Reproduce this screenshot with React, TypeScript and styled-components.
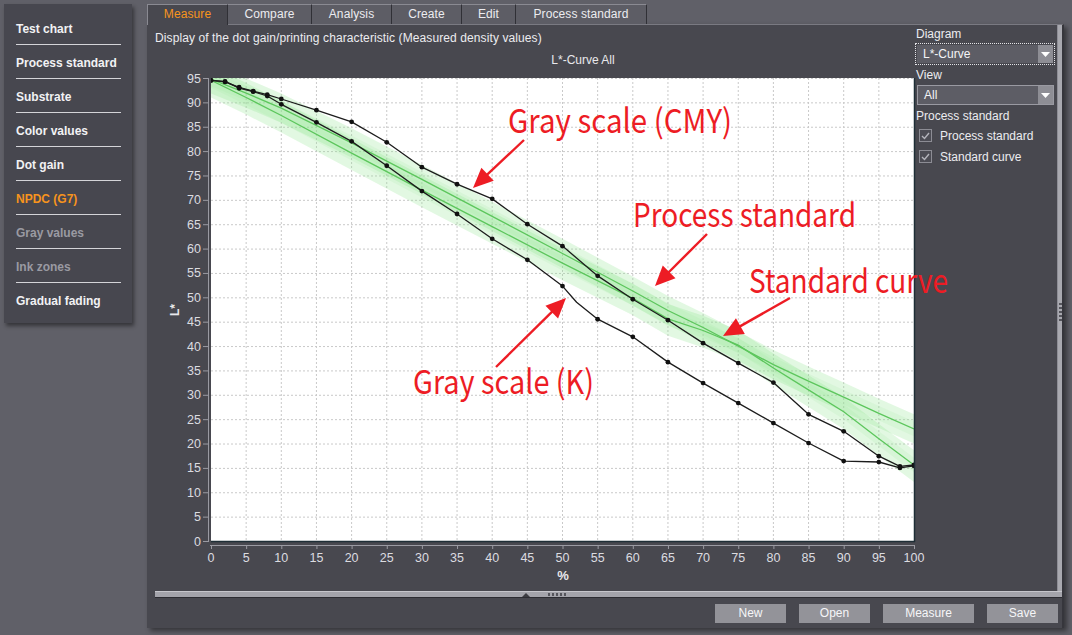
import React from "react";
import styled, { createGlobalStyle } from "styled-components";

const GlobalStyle = createGlobalStyle`
  html, body { margin: 0; padding: 0; background: #606068; }
  body {
    font-family: "Liberation Sans", Arial, sans-serif;
    font-size: 12px;
    color: #e8e8ec;
    width: 1072px;
    height: 635px;
    overflow: hidden;
  }
  * { box-sizing: border-box; }
`;

const Page = styled.div`
  display: flex;
  align-items: flex-start;
  gap: 15px;
  padding: 4px 0 0 4px;
`;

const Sidebar = styled.nav`
  width: 128px;
  background: #47474f;
  padding: 7px 11px 7px 12px;
  box-shadow: 2px 3px 4px rgba(0, 0, 0, 0.45);
  display: flex;
  flex-direction: column;
`;

type Tone = "normal" | "active" | "disabled";

const NavItem = styled.div<{ $tone: Tone; $last?: boolean }>`
  padding: 11px 0 8px;
  line-height: 14px;
  font-weight: bold;
  font-size: 12px;
  white-space: nowrap;
  color: ${(p) =>
    p.$tone === "active" ? "#f7941d" : p.$tone === "disabled" ? "#9a9aa2" : "#f2f2f4"};
  border-bottom: ${(p) => (p.$last ? "none" : "1px solid #d4d4d8")};
`;

const Panel = styled.section`
  position: relative;
  width: 917px;
  height: 624px;
  display: flex;
  flex-direction: column;
`;

const TabBar = styled.div`
  display: flex;
  height: 20px;
  align-items: flex-start;
`;

const Tab = styled.div<{ $w: number; $active?: boolean }>`
  width: ${(p) => p.$w}px;
  height: ${(p) => (p.$active ? 21 : 20)}px;
  position: relative;
  z-index: ${(p) => (p.$active ? 2 : 1)};
  background: ${(p) => (p.$active ? "#48484f" : "#5d5d65")};
  border-top: 1px solid #8a8a92;
  border-right: 1px solid #303036;
  border-left: ${(p) => (p.$active ? "1px solid #8a8a92" : "none")};
  color: ${(p) => (p.$active ? "#f7941d" : "#ececf0")};
  text-align: center;
  line-height: 19px;
  font-size: 12px;
  letter-spacing: 0.1px;
  white-space: nowrap;
`;

const Body = styled.div`
  flex: 1;
  display: flex;
  flex-direction: column;
  background: #48484f;
  border-top: 1px solid #7a7a82;
  border-right: 2px solid #36363c;
  box-shadow: 3px 3px 5px rgba(0, 0, 0, 0.45);
`;

const MainRow = styled.div`
  display: flex;
  height: 566px;
`;

const ChartCol = styled.div`
  width: 766px;
  display: flex;
  flex-direction: column;
`;

const Description = styled.div`
  padding: 6px 0 3px 8px;
  line-height: 14px;
  color: #ececf0;
  letter-spacing: 0.1px;
  white-space: nowrap;
`;

const ChartSvg = styled.svg`
  display: block;
  overflow: visible;
  position: relative;
  z-index: 1;
`;

const RightPanel = styled.aside`
  width: 144px;
  padding: 2px 2px 0 2px;
  display: flex;
  flex-direction: column;
`;

const FieldLabel = styled.div<{ $mt?: number }>`
  line-height: 14px;
  padding-left: 1px;
  margin-top: ${(p) => p.$mt ?? 0}px;
  color: #ececf0;
  white-space: nowrap;
`;

const FocusRing = styled.div`
  margin-top: 2px;
  height: 22px;
  border: 1px dotted #e4e4e8;
  padding: 1px;
  display: flex;
`;

const SelectBox = styled.div<{ $framed?: boolean }>`
  flex: ${(p) => (p.$framed ? "0 0 20px" : "1")};
  display: flex;
  align-items: stretch;
  background: #5d5d65;
  border: ${(p) => (p.$framed ? "1px solid #9a9aa2" : "none")};
  margin: ${(p) => (p.$framed ? "3px 1px 0 2px" : "0")};
`;

const SelectText = styled.div`
  flex: 1;
  padding-left: 6px;
  display: flex;
  align-items: center;
  color: #f4f4f6;
  font-size: 12px;
`;

const SelectArrow = styled.div`
  width: 15px;
  background: #8e8e95;
  display: flex;
  align-items: center;
  justify-content: center;
`;

const CheckRow = styled.div<{ $mt?: number }>`
  height: 21px;
  margin-top: ${(p) => p.$mt ?? 0}px;
  display: flex;
  align-items: center;
  gap: 8px;
  padding-left: 4px;
  color: #ececf0;
  white-space: nowrap;
`;

const CheckBox = styled.div`
  width: 13px;
  height: 13px;
  border: 1px solid #8c8c94;
  background: #4c4c54;
  display: flex;
  align-items: center;
  justify-content: center;
`;

const VSplit = styled.div`
  width: 5px;
  background: #a9a9b0;
  border-left: 1px solid #8e8e96;
  display: flex;
  align-items: center;
  justify-content: center;
`;

const VGrip = styled.div`
  width: 3px;
  height: 18px;
  margin-top: 8px;
  background: repeating-linear-gradient(to bottom, #55555c 0 2px, transparent 2px 4px);
`;

const HSplit = styled.div`
  height: 7px;
  margin-left: 8px;
  background: #a4a4ab;
  border-top: 1px solid #c6c6cc;
  border-bottom: 1px solid #2c2c32;
  display: flex;
  align-items: center;
  padding-left: 367px;
  gap: 18px;
`;

const HTriangle = styled.div`
  width: 0;
  height: 0;
  border-left: 4px solid transparent;
  border-right: 4px solid transparent;
  border-bottom: 4px solid #3c3c42;
`;

const HGrip = styled.div`
  width: 18px;
  height: 3px;
  background: repeating-linear-gradient(to right, #55555c 0 2px, transparent 2px 4px);
`;

const ButtonRow = styled.div`
  flex: 1;
  display: flex;
  justify-content: flex-end;
  align-items: flex-start;
  gap: 13px;
  padding: 6px 4px 0 0;
`;

const Button = styled.button<{ $w: number }>`
  width: ${(p) => p.$w}px;
  height: 19px;
  padding: 0;
  border: none;
  background: #939399;
  color: #f6f6f8;
  font-family: "Liberation Sans", Arial, sans-serif;
  font-size: 12px;
  line-height: 19px;
`;

const Overlay = styled.svg`
  position: absolute;
  left: 0;
  top: 0;
  z-index: 3;
  pointer-events: none;
  overflow: visible;
`;

/* ---------- chart geometry (page coordinates) ---------- */
const X0 = 211;
const X1 = 914;
const Y0 = 78;
const Y1 = 541;
const px = (v: number) => X0 + (v / 100) * (X1 - X0);
const py = (L: number) => Y1 - (L / 95) * (Y1 - Y0);
const toPts = (d: number[][]) =>
  d.map(([v, L]) => `${px(v).toFixed(1)},${py(L).toFixed(1)}`).join(" ");
const bandPts = (d: number[][], up: number, down: number) => {
  const top = d.map(([v, L]) => [v, L + up]);
  const bot = d.map(([v, L]) => [v, L - down]).reverse();
  return toPts([...top, ...bot]);
};

const CMY: number[][] = [
  [0, 94.5], [2, 94.2], [4, 93.1], [6, 92.3], [8, 91.6], [10, 90.7], [15, 88.4], [20, 86],
  [25, 81.8], [30, 76.7], [35, 73.2], [40, 70.2], [45, 65], [50, 60.5], [55, 54.4],
  [60, 49.6], [65, 45.3], [70, 40.6], [75, 36.5], [80, 32.5], [85, 26], [90, 22.5],
  [95, 17.4], [98, 15.3], [100, 15.6],
];
const K: number[][] = [
  [0, 94.5], [2, 94.3], [4, 92.9], [6, 92.2], [8, 91.3], [10, 89.6], [15, 85.9], [20, 82],
  [25, 77], [30, 71.8], [35, 67.1], [40, 62], [45, 57.7], [50, 52.3], [55, 45.5],
  [60, 41.9], [65, 36.7], [70, 32.4], [75, 28.3], [80, 24.2], [85, 20.1], [90, 16.4],
  [95, 16.2], [98, 15], [100, 15.4],
];
const KLine: number[][] = [...K.slice(0, 14), [52, 49], ...K.slice(14)];
const PS: number[][] = [
  [0, 94.8], [5, 91.9], [10, 88.8], [20, 81.7], [30, 74.2], [40, 66.6], [50, 59], [60, 51.3],
  [65, 47.3], [70, 43.8], [75, 40], [80, 36.2], [85, 32.8], [90, 29.5], [95, 26.2], [100, 23],
];
const SC: number[][] = [
  [0, 94.5], [5, 91], [10, 87.3], [20, 79.6], [30, 72], [40, 64.5], [50, 57], [60, 49.8],
  [65, 45.6], [70, 43.2], [75, 40.2], [80, 35.5], [85, 31], [90, 26.5], [95, 21], [100, 15.6],
];

const yTicks = Array.from({ length: 20 }, (_, i) => i * 5);
const xTicks = Array.from({ length: 21 }, (_, i) => i * 5);

function Chart() {
  return (
    <ChartSvg width={766} height={531} viewBox="0 0 766 531">
      <defs>
        <clipPath id="plotClip">
          <rect x={X0} y={Y0} width={X1 - X0} height={Y1 - Y0} />
        </clipPath>
      </defs>
      <g transform="translate(-147,-48)" fontFamily='"Liberation Sans", Arial, sans-serif'>
        <text x={583} y={64} fontSize={12} fill="#e8e8ec" textAnchor="middle">
          L*-Curve All
        </text>
        <rect x={X0} y={Y0} width={X1 - X0} height={Y1 - Y0} fill="#ffffff" />
        {/* grid */}
        {xTicks.slice(1, 20).map((v) => (
          <line key={`gx${v}`} x1={px(v)} x2={px(v)} y1={Y0} y2={Y1} stroke="#c9c9c9" strokeDasharray="2 2" />
        ))}
        {yTicks.slice(1).map((L) => (
          <line key={`gy${L}`} x1={X0} x2={X1} y1={py(L) + 0.5} y2={py(L) + 0.5} stroke="#c9c9c9" strokeDasharray="2 2" />
        ))}
        <g clipPath="url(#plotClip)">
          <polygon points={bandPts(SC, 3, 3.5)} fill="#8fe58f" opacity={0.26} />
          <polygon points={bandPts(PS, 3, 3)} fill="#8fe58f" opacity={0.26} />
          <polygon points={bandPts(SC, 1.5, 1.5)} fill="#8fe58f" opacity={0.12} />
          <polygon points={bandPts(PS, 1.5, 1.5)} fill="#8fe58f" opacity={0.12} />
          <polyline points={toPts(PS)} fill="none" stroke="#5cc65c" strokeWidth={1.3} />
          <polyline points={toPts(SC)} fill="none" stroke="#5cc65c" strokeWidth={1.3} />
          <polyline points={toPts(CMY)} fill="none" stroke="#1c1c1c" strokeWidth={1.3} strokeLinejoin="round" />
          <polyline points={toPts(KLine)} fill="none" stroke="#1c1c1c" strokeWidth={1.3} strokeLinejoin="round" />
          {CMY.map(([v, L]) => (
            <circle key={`c${v}`} cx={px(v)} cy={py(L)} r={2.4} fill="#111" />
          ))}
          {K.map(([v, L]) => (
            <circle key={`k${v}`} cx={px(v)} cy={py(L)} r={2.4} fill="#111" />
          ))}
        </g>
        {/* frame */}
        <line x1={X1 + 0.5} x2={X1 + 0.5} y1={Y0} y2={Y1 + 1} stroke="#1e2e36" strokeWidth={1.5} />
        <line x1={X0} x2={X1 + 1} y1={Y1 + 0.5} y2={Y1 + 0.5} stroke="#1e2e36" strokeWidth={1.5} />
        {/* y axis */}
        <line x1={208.5} x2={208.5} y1={Y0} y2={Y1 + 1} stroke="#9a9aa2" />
        {yTicks.map((L) => (
          <g key={`yt${L}`}>
            <line x1={203} x2={208} y1={py(L) + 0.5} y2={py(L) + 0.5} stroke="#9a9aa2" />
            <text x={201} y={py(L) + 4.5} fontSize={12.5} fill="#dcdce0" textAnchor="end">
              {L}
            </text>
          </g>
        ))}
        {/* x axis */}
        <line x1={X0 - 1} x2={X1 + 1} y1={545.5} y2={545.5} stroke="#9a9aa2" />
        {xTicks.map((v) => (
          <g key={`xt${v}`}>
            <line x1={px(v) + 0.5} x2={px(v) + 0.5} y1={546} y2={549} stroke="#9a9aa2" />
            <text x={px(v)} y={562} fontSize={12.5} fill="#dcdce0" textAnchor="middle">
              {v}
            </text>
          </g>
        ))}
        <text x={563} y={580} fontSize={13} fontWeight="bold" fill="#e8e8ec" textAnchor="middle">
          %
        </text>
        <text
          x={179}
          y={310}
          fontSize={12}
          fontWeight="bold"
          fill="#e8e8ec"
          textAnchor="middle"
          transform="rotate(-90 179 310)"
        >
          L*
        </text>
      </g>
    </ChartSvg>
  );
}

const RED = "#ed1c24";

function Arrow({ x1, y1, x2, y2 }: { x1: number; y1: number; x2: number; y2: number }) {
  const dx = x2 - x1;
  const dy = y2 - y1;
  const len = Math.hypot(dx, dy);
  const ux = dx / len;
  const uy = dy / len;
  const hl = 20;
  const hw = 9;
  const bx = x2 - ux * hl;
  const by = y2 - uy * hl;
  const p1 = `${bx - uy * hw},${by + ux * hw}`;
  const p2 = `${bx + uy * hw},${by - ux * hw}`;
  return (
    <g>
      <line x1={x1} y1={y1} x2={bx + ux * 2} y2={by + uy * 2} stroke={RED} strokeWidth={2.4} />
      <polygon points={`${x2},${y2} ${p1} ${p2}`} fill={RED} />
    </g>
  );
}

function Note({ x, y, w, children }: { x: number; y: number; w: number; children: string }) {
  return (
    <text
      x={x}
      y={y}
      fontSize={33}
      fill={RED}
      textLength={w}
      lengthAdjust="spacingAndGlyphs"
      fontFamily='"Noto Sans CJK JP", "Noto Sans", sans-serif'
    >
      {children}
    </text>
  );
}

function Annotations() {
  return (
    <Overlay width={917} height={624} viewBox="0 0 917 624">
      <g transform="translate(-147,-4)">
        <Note x={508} y={133} w={224}>Gray scale (CMY)</Note>
        <Note x={633} y={227} w={223}>Process standard</Note>
        <Note x={749} y={293} w={199}>Standard curve</Note>
        <Note x={413} y={394} w={181}>Gray scale (K)</Note>
        <Arrow x1={524} y1={140} x2={473} y2={188} />
        <Arrow x1={707} y1={234} x2={655} y2={286} />
        <Arrow x1={790} y1={298} x2={723} y2={336} />
        <Arrow x1={496} y1={367} x2={566} y2={298} />
      </g>
    </Overlay>
  );
}

const DownTriangle = () => (
  <svg width="9" height="5" viewBox="0 0 9 5">
    <polygon points="0,0 9,0 4.5,5" fill="#ffffff" />
  </svg>
);

const CheckMark = () => (
  <svg width="9" height="8" viewBox="0 0 9 8">
    <polyline points="1,4 3.5,6.5 8,1" fill="none" stroke="#b4b4bc" strokeWidth="1.4" />
  </svg>
);

const navItems: { label: string; tone: Tone }[] = [
  { label: "Test chart", tone: "normal" },
  { label: "Process standard", tone: "normal" },
  { label: "Substrate", tone: "normal" },
  { label: "Color values", tone: "normal" },
  { label: "Dot gain", tone: "normal" },
  { label: "NPDC (G7)", tone: "active" },
  { label: "Gray values", tone: "disabled" },
  { label: "Ink zones", tone: "disabled" },
  { label: "Gradual fading", tone: "normal" },
];

const tabs = [
  { label: "Measure", w: 81, active: true },
  { label: "Compare", w: 84 },
  { label: "Analysis", w: 80 },
  { label: "Create", w: 70 },
  { label: "Edit", w: 54 },
  { label: "Process standard", w: 131 },
];

export default function App() {
  return (
    <>
      <GlobalStyle />
      <Page>
        <Sidebar>
          {navItems.map((n, i) => (
            <NavItem key={n.label} $tone={n.tone} $last={i === navItems.length - 1}>
              {n.label}
            </NavItem>
          ))}
        </Sidebar>
        <Panel>
          <TabBar>
            {tabs.map((t) => (
              <Tab key={t.label} $w={t.w} $active={t.active}>
                {t.label}
              </Tab>
            ))}
          </TabBar>
          <Body>
            <MainRow>
              <ChartCol>
                <Description>
                  Display of the dot gain/printing characteristic (Measured density values)
                </Description>
                <Chart />
              </ChartCol>
              <RightPanel>
                <FieldLabel>Diagram</FieldLabel>
                <FocusRing>
                  <SelectBox>
                    <SelectText>L*-Curve</SelectText>
                    <SelectArrow>
                      <DownTriangle />
                    </SelectArrow>
                  </SelectBox>
                </FocusRing>
                <FieldLabel $mt={3}>View</FieldLabel>
                <SelectBox $framed>
                  <SelectText>All</SelectText>
                  <SelectArrow>
                    <DownTriangle />
                  </SelectArrow>
                </SelectBox>
                <FieldLabel $mt={4}>Process standard</FieldLabel>
                <CheckRow $mt={2}>
                  <CheckBox>
                    <CheckMark />
                  </CheckBox>
                  Process standard
                </CheckRow>
                <CheckRow>
                  <CheckBox>
                    <CheckMark />
                  </CheckBox>
                  Standard curve
                </CheckRow>
              </RightPanel>
              <VSplit>
                <VGrip />
              </VSplit>
            </MainRow>
            <HSplit>
              <HTriangle />
              <HGrip />
            </HSplit>
            <ButtonRow>
              <Button $w={71}>New</Button>
              <Button $w={71}>Open</Button>
              <Button $w={91}>Measure</Button>
              <Button $w={71}>Save</Button>
            </ButtonRow>
          </Body>
          <Annotations />
        </Panel>
      </Page>
    </>
  );
}
